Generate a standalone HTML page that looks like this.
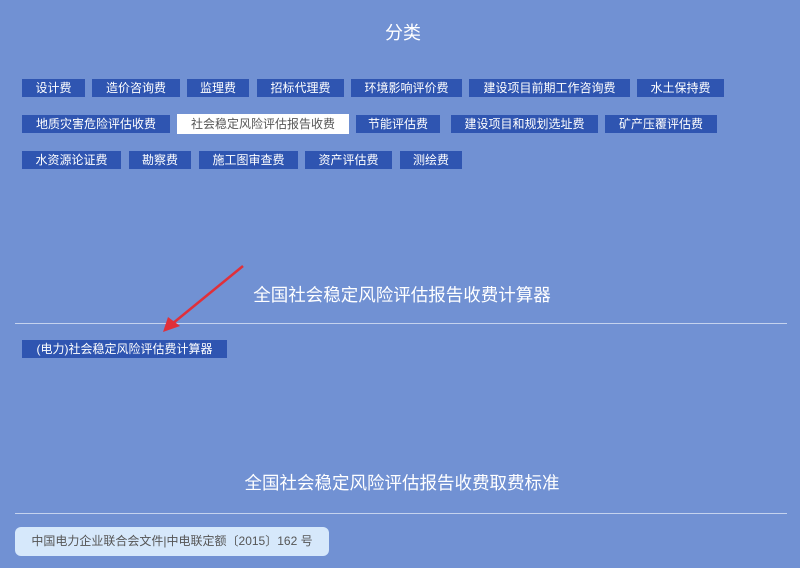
<!DOCTYPE html>
<html><head><meta charset="utf-8"><style>
body{margin:0;width:800px;height:568px;background:#7191d3;font-family:"Liberation Sans","Noto Sans CJK SC",sans-serif;position:relative;overflow:hidden}
.b{position:absolute;height:18px;line-height:18px;background:#2f55b1;color:#fff;font-size:12px;text-align:center;white-space:nowrap}
.w{background:#fff;color:#555}
.h{position:absolute;left:0;width:800px;text-align:center;color:#fff}
.l{position:absolute;left:15px;width:772px;height:1px;background:#c5d3ee}
</style></head><body>
<div class="h" style="top:19px;font-size:18px;left:3px">分类</div>
<div class="b" style="left:22px;top:79px;width:63px">设计费</div>
<div class="b" style="left:92px;top:79px;width:88px">造价咨询费</div>
<div class="b" style="left:187px;top:79px;width:62px">监理费</div>
<div class="b" style="left:257px;top:79px;width:87px">招标代理费</div>
<div class="b" style="left:351px;top:79px;width:111px">环境影响评价费</div>
<div class="b" style="left:469px;top:79px;width:161px">建设项目前期工作咨询费</div>
<div class="b" style="left:637px;top:79px;width:87px">水土保持费</div>
<div class="b" style="left:22px;top:115px;width:148px">地质灾害危险评估收费</div>
<div class="b w" style="left:177px;top:114px;width:172px;height:20px;line-height:20px">社会稳定风险评估报告收费</div>
<div class="b" style="left:356px;top:115px;width:84px">节能评估费</div>
<div class="b" style="left:451px;top:115px;width:147px">建设项目和规划选址费</div>
<div class="b" style="left:605px;top:115px;width:112px">矿产压覆评估费</div>
<div class="b" style="left:22px;top:151px;width:99px">水资源论证费</div>
<div class="b" style="left:129px;top:151px;width:62px">勘察费</div>
<div class="b" style="left:199px;top:151px;width:99px">施工图审查费</div>
<div class="b" style="left:305px;top:151px;width:87px">资产评估费</div>
<div class="b" style="left:400px;top:151px;width:62px">测绘费</div>
<div class="h" style="top:282px;font-size:17.5px;left:2px">全国社会稳定风险评估报告收费计算器</div>
<div class="l" style="top:323px"></div>
<div class="b" style="left:22px;top:340px;width:205px">(电力)社会稳定风险评估费计算器</div>
<svg style="position:absolute;left:0;top:0" width="800" height="568"><line x1="243" y1="266" x2="172" y2="324" stroke="#e0303a" stroke-width="2.5"/><polygon points="163,332 168,317 180,326" fill="#e0303a"/></svg>
<div class="h" style="top:470px;font-size:17.5px;left:2px">全国社会稳定风险评估报告收费取费标准</div>
<div class="l" style="top:513px"></div>
<div style="position:absolute;left:15px;top:527px;width:314px;height:29px;line-height:29px;background:#d6e8fb;border-radius:6px;color:#555;font-size:12px;text-align:center">中国电力企业联合会文件|中电联定额〔2015〕162 号</div>
</body></html>
